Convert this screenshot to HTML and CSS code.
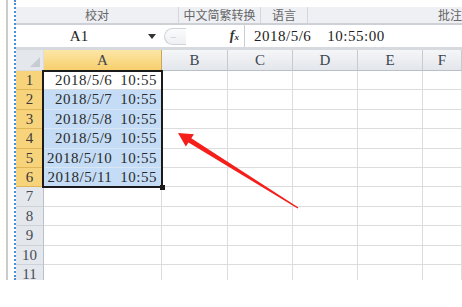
FILE: index.html
```html
<html>
<head>
    <title>Sheet</title>
    <link rel="stylesheet" href="styles.css">
</head>
<body>
    <div class="frame">
        <div class="sheet">
            <div class="ribbon">
                <div class="group g1">校对</div>
                <div class="group g2">中文简繁转换</div>
                <div class="group g3">语言</div>
                <div class="group g4">批注</div>
            </div>
            <div class="formula">
                <div class="namebox">A1</div>
                <div class="drop"><span class="tri"></span></div>
                <div class="fxbox">
                    <span class="pill">&minus;</span>
                    <span class="fx"><i>f</i><span class="x">x</span></span>
                </div>
                <div class="input"><span>2018/5/6</span><span>10:55:00</span></div>
            </div>
            <div class="grid">
                <div class="corner"></div>
                <div class="ch active">A</div>
                <div class="ch">B</div>
                <div class="ch">C</div>
                <div class="ch">D</div>
                <div class="ch">E</div>
                <div class="ch">F</div>

                <div class="rh active">1</div>
                <div class="cell val first"><span>2018/5/6</span><span>10:55</span></div>
                <div class="cell"></div><div class="cell"></div><div class="cell"></div><div class="cell"></div><div class="cell"></div>

                <div class="rh active">2</div>
                <div class="cell val sel"><span>2018/5/7</span><span>10:55</span></div>
                <div class="cell"></div><div class="cell"></div><div class="cell"></div><div class="cell"></div><div class="cell"></div>

                <div class="rh active">3</div>
                <div class="cell val sel"><span>2018/5/8</span><span>10:55</span></div>
                <div class="cell"></div><div class="cell"></div><div class="cell"></div><div class="cell"></div><div class="cell"></div>

                <div class="rh active">4</div>
                <div class="cell val sel"><span>2018/5/9</span><span>10:55</span></div>
                <div class="cell"></div><div class="cell"></div><div class="cell"></div><div class="cell"></div><div class="cell"></div>

                <div class="rh active">5</div>
                <div class="cell val sel"><span>2018/5/10</span><span>10:55</span></div>
                <div class="cell"></div><div class="cell"></div><div class="cell"></div><div class="cell"></div><div class="cell"></div>

                <div class="rh active">6</div>
                <div class="cell val sel"><span>2018/5/11</span><span>10:55</span></div>
                <div class="cell"></div><div class="cell"></div><div class="cell"></div><div class="cell"></div><div class="cell"></div>

                <div class="rh">7</div>
                <div class="cell"></div><div class="cell"></div><div class="cell"></div><div class="cell"></div><div class="cell"></div><div class="cell"></div>
                <div class="rh">8</div>
                <div class="cell"></div><div class="cell"></div><div class="cell"></div><div class="cell"></div><div class="cell"></div><div class="cell"></div>
                <div class="rh">9</div>
                <div class="cell"></div><div class="cell"></div><div class="cell"></div><div class="cell"></div><div class="cell"></div><div class="cell"></div>
                <div class="rh">10</div>
                <div class="cell"></div><div class="cell"></div><div class="cell"></div><div class="cell"></div><div class="cell"></div><div class="cell"></div>
                <div class="rh">11</div>
                <div class="cell"></div><div class="cell"></div><div class="cell"></div><div class="cell"></div><div class="cell"></div><div class="cell"></div>

                <div class="selection"></div>
            </div>
        </div>
    </div>
    <svg class="arrow" width="462" height="307" viewBox="0 0 462 307">
        <polygon fill="#f41f1a" points="178,133 194,134.2 191.3,138.3 298.4,207.5 297.6,208.5 188.5,142.6 185.8,146.6"/>
    </svg>
</body>
</html>
```

FILE: styles.css
```css
body {
    margin: 0;
    width: 462px;
    height: 307px;
    background: #fff;
    position: relative;
    overflow: hidden;
    font-family: "Liberation Serif", serif;
}
.frame {
    margin-left: 6px;
    height: 280px;
    border-left: 2px solid #c9cbcf;
    padding-left: 6px;
    overflow: hidden;
}
.sheet {
    height: 100%;
    border-left: 2px dotted #4a8fd8;
    padding-top: 7px;
    box-sizing: border-box;
}
.ribbon {
    display: flex;
    height: 16px;
    background: #eef0f4;
    font-family: "Noto Sans CJK SC", sans-serif;
    font-size: 12px;
    line-height: 16px;
    color: #666;
}
.group {
    border-right: 1px solid #d3d7dd;
    text-align: center;
    box-sizing: border-box;
}
.g1 { width: 163px; }
.g2 { width: 82px; }
.g3 { width: 47px; }
.g4 {
    flex: 1;
    border-right: none;
    text-align: left;
    padding-left: 130px;
}
.formula {
    display: flex;
    align-items: center;
    height: 22px;
    border-top: 2px solid #cdd1d6;
    border-bottom: 3px solid #d6d9de;
    background: #fff;
}
.namebox {
    width: 126px;
    text-align: center;
    font-size: 15px;
    color: #222;
}
.drop {
    width: 20px;
    display: flex;
    justify-content: center;
}
.tri {
    width: 0;
    height: 0;
    border-left: 4px solid transparent;
    border-right: 4px solid transparent;
    border-top: 5px solid #333;
}
.fxbox {
    width: 83px;
    height: 22px;
    display: flex;
    align-items: center;
    justify-content: space-between;
    border-right: 1px solid #c9cdd2;
    box-sizing: border-box;
    padding-right: 5px;
}
.pill {
    width: 22px;
    height: 17px;
    margin-left: 2px;
    border: 1px solid #cfd3d8;
    border-right: none;
    border-radius: 10px 0 0 10px;
    color: #c0c4c9;
    font-size: 11px;
    line-height: 16px;
    padding-left: 5px;
    box-sizing: border-box;
    background: linear-gradient(#fafbfc, #eef0f3);
}
.fx {
    font-size: 14px;
    font-weight: bold;
    color: #333;
}
.fx .x {
    font-size: 9px;
    font-style: italic;
}
.input {
    display: flex;
    gap: 16px;
    padding-left: 9px;
    font-size: 15px;
    color: #222;
    letter-spacing: 0.5px;
}
.grid {
    display: grid;
    position: relative;
    grid-template-columns: 28px 118px 66px 65px 65px 65px 1fr;
    grid-template-rows: 21px 19px 20px 19px 20px 19px 19px 20px 19px 20px 19px 20px;
}
.grid > div {
    box-sizing: border-box;
    border-right: 1px solid #dcdcdc;
    border-bottom: 1px solid #dcdcdc;
}
.corner {
    background: #e4e7ec;
    position: relative;
}
.corner::after {
    content: "";
    position: absolute;
    right: 3px;
    bottom: 3px;
    border-left: 10px solid transparent;
    border-bottom: 10px solid #c7ccd3;
}
.grid .ch {
    background: linear-gradient(#f5f6f8, #e3e6eb);
    border-right-color: #c6cbd2;
    border-bottom-color: #b9c0c9;
    text-align: center;
    font-size: 15px;
    line-height: 20px;
    color: #3d4450;
}
.grid .ch.active {
    background: linear-gradient(#fce6a6, #f7cf6d);
    border-right-color: #c7a655;
    border-bottom-color: #c79f45;
}
.grid .rh {
    background: #e4e7ec;
    border-right-color: #b9c0c9;
    border-bottom-color: #cdd2d8;
    text-align: center;
    font-size: 15px;
    line-height: 19px;
    color: #474d57;
}
.grid .rh.active {
    background: #f7d47c;
    border-bottom-color: #e0b656;
    color: #3a3a3a;
}
.cell.val {
    display: flex;
    justify-content: flex-end;
    align-items: center;
    gap: 8px;
    padding-right: 4px;
    font-size: 15px;
    letter-spacing: 0.5px;
    color: #2a2a2a;
}
.cell.sel {
    background: #c4dcf5;
    border-bottom-color: #d9e6f3;
}
.grid .selection {
    position: absolute;
    grid-column: 2 / 3;
    grid-row: 2 / 8;
    top: -1px;
    left: -2px;
    right: -1px;
    bottom: -1px;
    border: 2px solid #1b1b1b;
    pointer-events: none;
}
.selection::after {
    content: "";
    position: absolute;
    right: -4px;
    bottom: -4px;
    width: 5px;
    height: 5px;
    background: #1b1b1b;
}
.arrow {
    position: absolute;
    left: 0;
    top: 0;
}
```
